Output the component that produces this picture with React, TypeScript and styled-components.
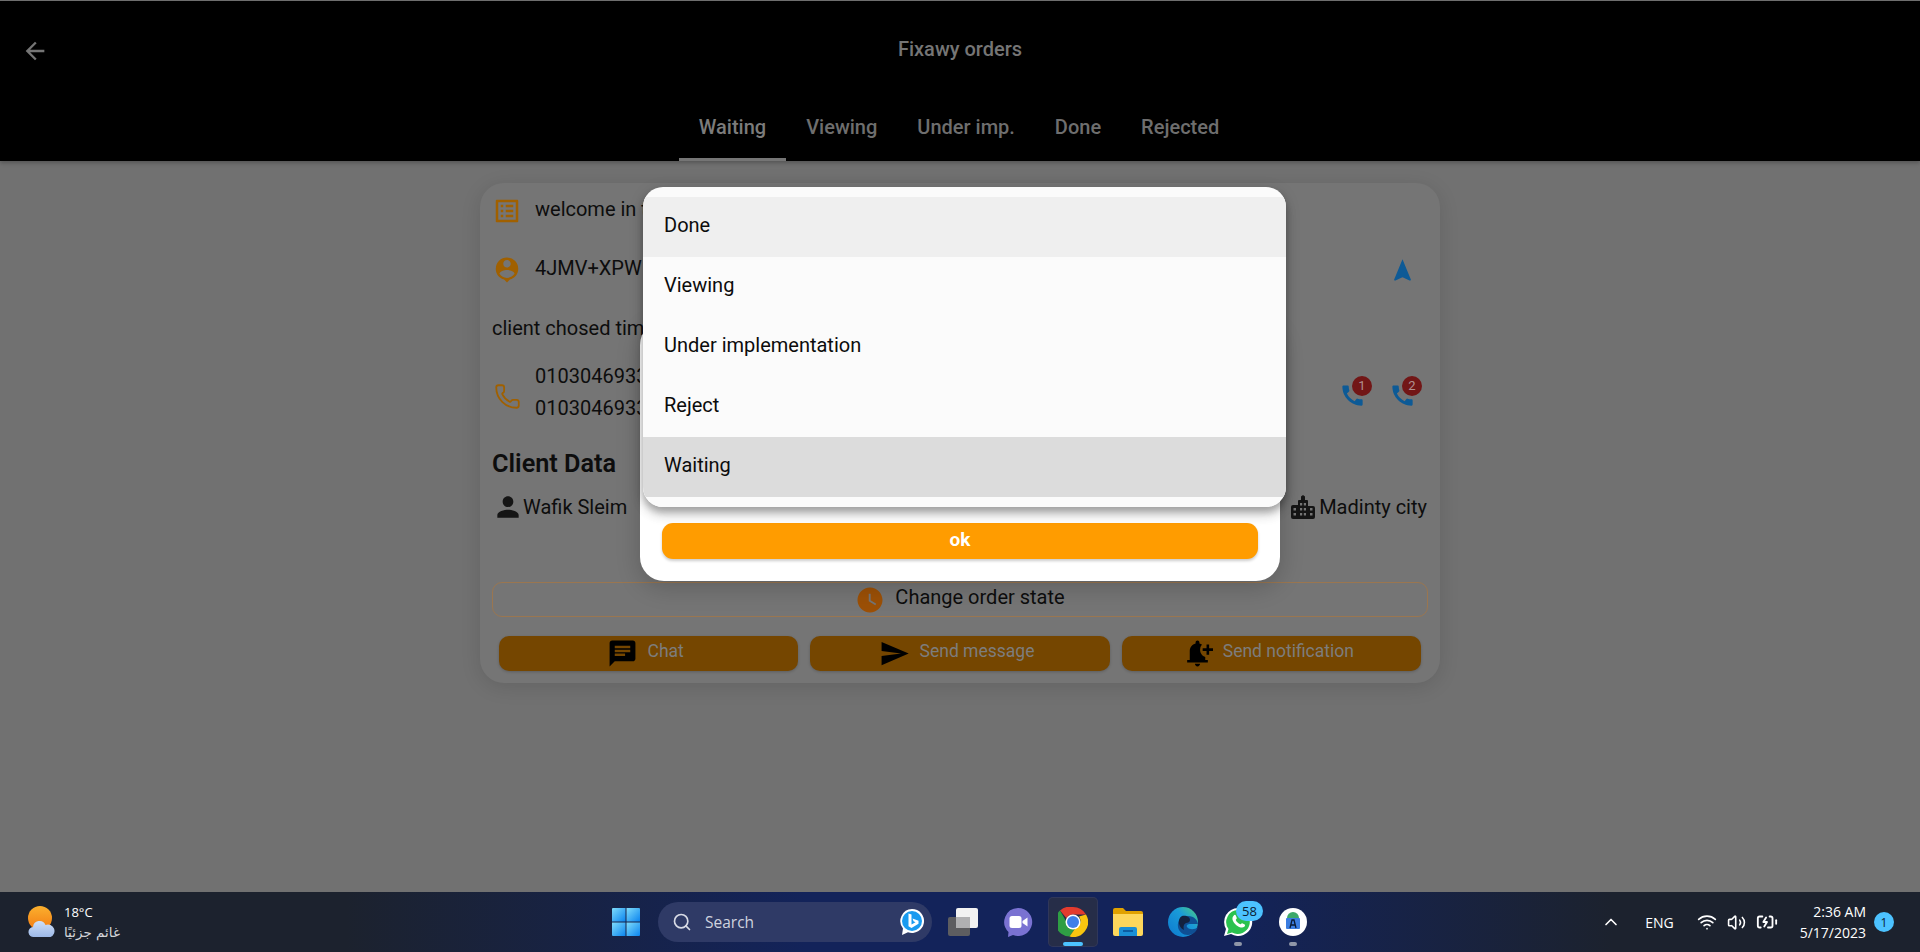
import styled, { createGlobalStyle } from 'styled-components';
import {
    MdArrowBack,
    MdOutlineListAlt,
    MdPersonPin,
    MdNavigation,
    MdCall,
    MdPerson,
    MdWatchLater,
    MdChat,
    MdSend,
    MdNotificationAdd,
} from 'react-icons/md';
import { Phone, Search, ChevronUp, Wifi, Volume2, BatteryCharging } from 'lucide-react';

const GlobalStyle = createGlobalStyle`
    html, body {
        margin: 0;
        padding: 0;
        height: 100%;
        overflow: hidden;
    }
    * {
        box-sizing: border-box;
    }
    body {
        font-family: Roboto, "Liberation Sans", sans-serif;
    }
`;

const Screen = styled.div`
    position: relative;
    display: flex;
    flex-direction: column;
    width: 1920px;
    height: 952px;
    background: #717171;
`;

const AppBar = styled.header`
    display: flex;
    flex-direction: column;
    height: 161px;
    background: #000;
    border-top: 1px solid #6e6e6e;
    box-shadow: 0 2px 4px rgba(0, 0, 0, 0.25);
`;

const Toolbar = styled.div`
    position: relative;
    display: flex;
    align-items: center;
    justify-content: center;
    height: 96px;
    color: #757575;
    font-size: 20px;
    font-weight: 500;
`;

const BackButton = styled.span`
    position: absolute;
    left: 21px;
    top: 36px;
    display: flex;
    font-size: 28px;
`;

const Tabs = styled.nav`
    display: flex;
    justify-content: center;
    height: 64px;
    padding-right: 2px;
`;

const Tab = styled.div<{ $active?: boolean }>`
    display: flex;
    align-items: center;
    height: 64px;
    padding: 0 20px 2px;
    color: ${({ $active }) => ($active ? '#7b7b7b' : '#6e6e6e')};
    font-size: 20px;
    font-weight: 500;
    border-bottom: 3px solid ${({ $active }) => ($active ? '#757575' : 'transparent')};
`;

const Body = styled.main`
    flex: 1;
    display: flex;
    justify-content: center;
    align-items: flex-start;
    padding-top: 22px;
`;

const Card = styled.section`
    display: flex;
    flex-direction: column;
    width: 960px;
    height: 500px;
    padding: 0 12px;
    background: #757575;
    border-radius: 24px;
    box-shadow: 0 4px 20px rgba(0, 0, 0, 0.12);
`;

const Row = styled.div<{ $height: number }>`
    display: flex;
    align-items: center;
    height: ${({ $height }) => $height}px;
    color: #0d0d0d;
    font-size: 20px;
`;

const LeadIcon = styled.span<{ $drop?: number }>`
    display: flex;
    justify-content: center;
    width: 30px;
    margin: ${({ $drop }) => $drop ?? 0}px 13px 0 0;
    color: #a06000;
    font-size: 30px;
`;

const RowText = styled.div<{ $lift?: number }>`
    flex: 1;
    margin-bottom: ${({ $lift }) => $lift ?? 0}px;
    line-height: 32px;
    white-space: nowrap;
`;

const CallButton = styled.span`
    position: relative;
    display: flex;
    width: 27px;
    margin-left: 23px;
    color: #0d5a96;
    font-size: 27px;
`;

const CallBadge = styled.span`
    position: absolute;
    top: -6px;
    right: -6px;
    display: flex;
    align-items: center;
    justify-content: center;
    width: 20px;
    height: 20px;
    border-radius: 50%;
    background: #721616;
    color: #b09090;
    font-size: 13px;
`;

const CallGroup = styled.div<{ $drop?: number }>`
    display: flex;
    padding: ${({ $drop }) => $drop ?? 0}px 12px 0 0;
`;

const Heading = styled.h2`
    display: flex;
    align-items: center;
    height: 56px;
    margin: 6px 0 0;
    color: #0d0d0d;
    font-size: 25.250px;
    font-weight: 600;
`;

const ClientRow = styled.div`
    display: flex;
    justify-content: space-between;
    align-items: center;
    height: 32px;
    padding-right: 1px;
    color: #0d0d0d;
    font-size: 20px;
`;

const ClientField = styled.span`
    display: flex;
    align-items: center;
`;

const ClientLabel = styled.span`
    margin-bottom: 1px;
`;

const PersonGlyph = styled(MdPerson)`
    margin-right: -1px;
    color: #151515;
    font-size: 32px;
`;

const CityGlyph = styled.svg`
    margin-right: 4px;
    color: #151515;
`;

const StateButton = styled.div`
    display: flex;
    align-items: center;
    justify-content: center;
    gap: 10px;
    height: 35px;
    margin-top: 59px;
    border: 1px solid #9a7650;
    border-radius: 10px;
    color: #0d0d0d;
    font-size: 20px;
    svg {
        font-size: 30px;
        color: #9c5006;
    }
`;

const ButtonLabel = styled.span`
    margin-bottom: 5px;
`;

const ActionRow = styled.div`
    display: grid;
    grid-template-columns: repeat(3, 1fr);
    gap: 12px;
    margin-top: 19px;
    padding: 0 7px;
`;

const ActionButton = styled.div`
    display: flex;
    align-items: center;
    justify-content: center;
    gap: 10px;
    height: 35px;
    padding-right: 7px;
    background: #754600;
    border-radius: 10px;
    color: #7d7d7d;
    font-size: 17.500px;
    box-shadow: 0 1px 3px rgba(0, 0, 0, 0.2);
    svg {
        color: #000;
        font-size: 31px;
    }
`;

const Dialog = styled.div`
    position: absolute;
    left: 640px;
    top: 321px;
    display: flex;
    align-items: flex-end;
    width: 640px;
    height: 260px;
    padding: 0 22px 22px;
    background: #fff;
    border-radius: 24px;
    box-shadow: 0 6px 24px rgba(0, 0, 0, 0.2);
`;

const OkButton = styled.div`
    display: flex;
    align-items: center;
    justify-content: center;
    width: 100%;
    height: 36px;
    padding-bottom: 4px;
    background: #ff9c00;
    border-radius: 11px;
    color: #fff;
    font-size: 19px;
    font-weight: 700;
    box-shadow: 0 2px 3px rgba(0, 0, 0, 0.2);
`;

const Menu = styled.ul`
    position: absolute;
    left: 643px;
    top: 187px;
    width: 643px;
    height: 320px;
    margin: 0;
    padding: 10px 0;
    list-style: none;
    background: #fbfbfb;
    border-radius: 20px;
    overflow: hidden;
`;

const MenuShadow = styled.div`
    position: absolute;
    left: 643px;
    top: 187px;
    width: 643px;
    height: 320px;
    border-radius: 20px;
    box-shadow:
        0 5px 6px rgba(0, 0, 0, 0.2),
        0 8px 12px rgba(0, 0, 0, 0.14),
        0 3px 16px rgba(0, 0, 0, 0.12);
`;

const MenuItem = styled.li<{ $bg?: string }>`
    display: flex;
    align-items: center;
    height: 60px;
    padding: 0 0 5px 21px;
    background: ${({ $bg }) => $bg ?? 'transparent'};
    color: #0c0c0c;
    font-size: 20px;
`;

const Taskbar = styled.footer`
    display: flex;
    align-items: center;
    height: 60px;
    background: linear-gradient(
        90deg,
        #1c222e 0,
        #1c222e 18%,
        #13235a 42%,
        #13235a 64%,
        #1c222e 84%,
        #1c222e 100%
    );
    font-family: "Open Sans", "Noto Sans", sans-serif;
    color: #fff;
`;

const WeatherArea = styled.div`
    display: flex;
    align-items: center;
    gap: 8px;
    width: 612px;
    padding-left: 27px;
`;

const WeatherText = styled.div`
    display: flex;
    flex-direction: column;
    font-size: 13px;
    line-height: 20px;
`;

const ArabicText = styled.span`
    direction: rtl;
    color: #d4d6da;
    font-family: "DejaVu Sans", sans-serif;
    font-size: 13.500px;
`;

const SearchPill = styled.div`
    display: flex;
    align-items: center;
    width: 274px;
    height: 40px;
    margin: 0 6px 0 18px;
    padding: 0 7px 0 14px;
    gap: 13px;
    border-radius: 20px;
    background: #2f3a66;
    color: #cfd3df;
    font-size: 15.500px;
`;

const SearchLabel = styled.span`
    flex: 1;
`;

const AppIcon = styled.div<{ $active?: boolean }>`
    position: relative;
    display: flex;
    align-items: center;
    justify-content: center;
    width: 50px;
    height: 50px;
    margin-right: 5px;
    border-radius: 5px;
    background: ${({ $active }) => ($active ? '#262d48' : 'transparent')};
    box-shadow: ${({ $active }) => ($active ? 'inset 0 0 0 1px #30375a' : 'none')};
`;

const RunningDot = styled.span<{ $active?: boolean }>`
    position: absolute;
    left: 50%;
    bottom: 1px;
    width: ${({ $active }) => ($active ? 20 : 8)}px;
    height: 4px;
    transform: translateX(-50%);
    border-radius: 2px;
    background: ${({ $active }) => ($active ? '#4cc2ff' : '#8f96a8')};
`;

const CountBadge = styled.span`
    position: absolute;
    top: 4px;
    right: 0;
    display: flex;
    align-items: center;
    justify-content: center;
    width: 27px;
    height: 20px;
    border-radius: 10px;
    background: #4cc2ff;
    color: #0b1b33;
    font-size: 13px;
`;

const Tray = styled.div`
    display: flex;
    align-items: center;
    margin-left: auto;
    padding-right: 26px;
    font-size: 14px;
`;

const Lang = styled.span`
    margin: 0 23px 0 24px;
    font-size: 14px;
`;

const TrayIcons = styled.div`
    display: flex;
    align-items: center;
    gap: 10px;
`;

const Clock = styled.div`
    display: flex;
    flex-direction: column;
    align-items: flex-end;
    margin-left: 22px;
    line-height: 21px;
`;

const NoticeBadge = styled.span`
    display: flex;
    align-items: center;
    justify-content: center;
    width: 20px;
    height: 20px;
    margin-left: 8px;
    border-radius: 50%;
    background: #4cc2ff;
    color: #0b1b33;
    font-size: 12px;
`;

const CityIcon = () => (
    <CityGlyph width="24" height="24" viewBox="0 0 24 24">
        <path
            fillRule="evenodd"
            fill="currentColor"
            d="M10 1.500L12 0l2 1.500V5h2a1 1 0 0 1 1 1v5h5a2 2 0 0 1 2 2v9a2 2 0 0 1-2 2H2a2 2 0 0 1-2-2V12a2 2 0 0 1 2-2h5V6a1 1 0 0 1 1-1h2zM2.500 13v2.500H5V13zm0 5v2.500H5V18zM9 8v2.500h2.200V8zm3.800 0v2.500H15V8zM9 13v2.500h2.200V13zm3.800 0v2.500H15V13zM9 18v2.500h2.200V18zm3.800 0v2.500H15V18zM19 13v2.500h2.500V13zm0 5v2.500h2.500V18z"
        />
    </CityGlyph>
);

const WeatherIcon = () => (
    <svg width="29" height="32" viewBox="0 0 29 32">
        <defs>
            <linearGradient id="sun" x1="0" y1="0" x2="0" y2="1">
                <stop offset="0" stopColor="#fbb02e" />
                <stop offset="1" stopColor="#f27c14" />
            </linearGradient>
            <linearGradient id="cloud" x1="0" y1="0" x2="0" y2="1">
                <stop offset="0" stopColor="#cfe0f8" />
                <stop offset="1" stopColor="#9db9e8" />
            </linearGradient>
        </defs>
        <circle cx="13" cy="12" r="12" fill="url(#sun)" />
        <path
            d="M7 31a5 5 0 0 1-1-10 6.500 6.500 0 0 1 12.500-2 5.500 5.500 0 0 1 5 12z"
            fill="url(#cloud)"
        />
    </svg>
);

const WindowsLogo = () => (
    <svg width="28" height="28" viewBox="0 0 28 28">
        <defs>
            <linearGradient id="win" x1="0" y1="0" x2="1" y2="1">
                <stop offset="0" stopColor="#7fdcfb" />
                <stop offset="1" stopColor="#0a84ef" />
            </linearGradient>
        </defs>
        <path d="M0 1a1 1 0 0 1 1-1h12.500v13.500H0z" fill="url(#win)" />
        <path d="M14.500 0H27a1 1 0 0 1 1 1v12.500H14.500z" fill="url(#win)" />
        <path d="M0 14.500h13.500V28H1a1 1 0 0 1-1-1z" fill="url(#win)" />
        <path d="M14.500 14.500H28V27a1 1 0 0 1-1 1H14.500z" fill="url(#win)" />
    </svg>
);

const BingIcon = () => (
    <svg width="26" height="28" viewBox="0 0 26 28">
        <path d="M13 1a12 12 0 1 1-4 23.300L3 27l1-6.500A12 12 0 0 1 13 1z" fill="#fff" />
        <circle cx="13" cy="13" r="10" fill="#1a9bf0" />
        <path d="M9.500 5.500l3 1v10l4-2.300-2-1-1-2.700 6 2.300v3l-7 4.200-3-1.700z" fill="#fff" />
    </svg>
);

const TaskViewIcon = () => (
    <svg width="30" height="28" viewBox="0 0 30 28">
        <rect x="0" y="9" width="22" height="19" rx="2" fill="#5d5d60" />
        <rect x="8" y="0" width="22" height="20" rx="2" fill="#f2f2f2" />
        <rect x="8" y="9" width="14" height="11" fill="#b0b0b2" />
    </svg>
);

const TeamsIcon = () => (
    <svg width="30" height="30" viewBox="0 0 30 30">
        <path d="M15 1a14 14 0 1 1-5 27l-5 2 .5-5A14 14 0 0 1 15 1z" fill="#7a72d2" />
        <rect x="6.500" y="9" width="12" height="12" rx="2.500" fill="#fff" />
        <path d="M19.500 14l5-3.500v9l-5-3.500z" fill="#fff" />
    </svg>
);

const ChromeIcon = () => (
    <svg width="30" height="30" viewBox="0 0 30 30">
        <path d="M15 0a15 15 0 0 1 13 7.500H15A7.500 7.500 0 0 0 8.500 11.200L2 3.500A15 15 0 0 1 15 0z" fill="#e33b2e" />
        <path d="M2 3.500l6.500 11.500a7.500 7.500 0 0 0 9 6L11.500 29.600A15 15 0 0 1 2 3.500z" fill="#2f9e44" />
        <path d="M28 7.500A15 15 0 0 1 11.500 29.600L17.500 21A7.500 7.500 0 0 0 21 9.500z" fill="#f9c50f" />
        <circle cx="15" cy="15" r="7.500" fill="#fff" />
        <circle cx="15" cy="15" r="6" fill="#3f7fe8" />
    </svg>
);

const FolderIcon = () => (
    <svg width="30" height="28" viewBox="0 0 30 28">
        <path d="M0 2a2 2 0 0 1 2-2h8l3 3h15a2 2 0 0 1 2 2v3H0z" fill="#e0a100" />
        <path d="M0 6h30v20a2 2 0 0 1-2 2H2a2 2 0 0 1-2-2z" fill="#fdd75c" />
        <path d="M6 28v-7a2 2 0 0 1 2-2h14a2 2 0 0 1 2 2v7z" fill="#1a8fd6" />
        <rect x="10" y="22" width="10" height="2" fill="#0b5ea3" />
    </svg>
);

const EdgeIcon = () => (
    <svg width="30" height="30" viewBox="0 0 30 30">
        <defs>
            <linearGradient id="edge" x1="0" y1="1" x2="1" y2="0">
                <stop offset="0" stopColor="#0c79cf" />
                <stop offset="0.600" stopColor="#1a9bd8" />
                <stop offset="1" stopColor="#4fd07a" />
            </linearGradient>
        </defs>
        <circle cx="15" cy="15" r="15" fill="url(#edge)" />
        <path d="M30 18c0-5-4-9-10-9-7 0-11 5-10 11 1 6 8 10 14 7 3-1 5-4 6-7-3 3-9 3-11 0-1-2 1-3 3-3h8z" fill="#0f4f94" />
        <path d="M14 9c4-1 8 1 8 4 0 2-2 3-4 3-2 1-3 3-2 7-6-3-7-11-2-14z" fill="#13223f" />
    </svg>
);

const WhatsAppIcon = () => (
    <svg width="30" height="30" viewBox="0 0 30 30">
        <path d="M15 1a14 14 0 1 1-7 26L1 29l2-7A14 14 0 0 1 15 1z" fill="#fff" />
        <path d="M15 3a12 12 0 1 1-6 22.500L4 27l1.500-5A12 12 0 0 1 15 3z" fill="#2ac24f" />
        <path
            d="M10.500 8.500c1-1 2-1 2.300 0l1 2.500c.2.600-1 1.600-1 2 .8 2 2.500 3.500 4.500 4.300.5 0 1.300-1.300 1.900-1.100l2.500 1.200c.7.500.3 1.700-.4 2.400-1.700 1.400-4.300.7-6.800-.8-3-2-5.500-5.500-5-8 .1-1 .8-2 1.500-2.500z"
            fill="#fff"
        />
    </svg>
);

const StudioIcon = () => (
    <svg width="28" height="28" viewBox="0 0 28 28">
        <circle cx="14" cy="14" r="14" fill="#fff" />
        <path d="M8 10a6 6 0 0 1 12 0z" fill="#3ca86a" />
        <rect x="7" y="10" width="14" height="11" rx="1" fill="#3b7de0" />
        <path d="M11 20l2-8h2l2 8M12 17h4" stroke="#0a1a33" strokeWidth="1.300" fill="none" />
    </svg>
);

export default function App() {
    return (
        <>
            <GlobalStyle />
            <Screen>
                <AppBar>
                    <Toolbar>
                        <BackButton>
                            <MdArrowBack />
                        </BackButton>
                        Fixawy orders
                    </Toolbar>
                    <Tabs>
                        <Tab $active>Waiting</Tab>
                        <Tab>Viewing</Tab>
                        <Tab>Under imp.</Tab>
                        <Tab>Done</Tab>
                        <Tab>Rejected</Tab>
                    </Tabs>
                </AppBar>
                <Body>
                    <Card>
                        <Row $height={56}>
                            <LeadIcon>
                                <MdOutlineListAlt />
                            </LeadIcon>
                            <RowText $lift={4}>welcome in t</RowText>
                        </Row>
                        <Row $height={62}>
                            <LeadIcon>
                                <MdPersonPin />
                            </LeadIcon>
                            <RowText $lift={4}>4JMV+XPW</RowText>
                            <CallGroup>
                                <CallButton>
                                    <MdNavigation />
                                </CallButton>
                            </CallGroup>
                        </Row>
                        <Row $height={54}>
                            <RowText>client chosed time</RowText>
                        </Row>
                        <Row $height={74}>
                            <LeadIcon $drop={8}>
                                <Phone size={27} strokeWidth={1.600} />
                            </LeadIcon>
                            <RowText>
                                01030469331
                                <br />
                                01030469332
                            </RowText>
                            <CallGroup $drop={6}>
                                <CallButton>
                                    <MdCall />
                                    <CallBadge>1</CallBadge>
                                </CallButton>
                                <CallButton>
                                    <MdCall />
                                    <CallBadge>2</CallBadge>
                                </CallButton>
                            </CallGroup>
                        </Row>
                        <Heading>Client Data</Heading>
                        <ClientRow>
                            <ClientField>
                                <PersonGlyph />
                                <ClientLabel>Wafik Sleim</ClientLabel>
                            </ClientField>
                            <ClientField>
                                <CityIcon />
                                <ClientLabel>Madinty city</ClientLabel>
                            </ClientField>
                        </ClientRow>
                        <StateButton>
                            <MdWatchLater />
                            <ButtonLabel>Change order state</ButtonLabel>
                        </StateButton>
                        <ActionRow>
                            <ActionButton>
                                <MdChat />
                                <ButtonLabel>Chat</ButtonLabel>
                            </ActionButton>
                            <ActionButton>
                                <MdSend />
                                <ButtonLabel>Send message</ButtonLabel>
                            </ActionButton>
                            <ActionButton>
                                <MdNotificationAdd />
                                <ButtonLabel>Send notification</ButtonLabel>
                            </ActionButton>
                        </ActionRow>
                    </Card>
                </Body>
                <Dialog>
                    <OkButton>ok</OkButton>
                </Dialog>
                <MenuShadow />
                <Menu>
                    <MenuItem $bg="#efefef">Done</MenuItem>
                    <MenuItem>Viewing</MenuItem>
                    <MenuItem>Under implementation</MenuItem>
                    <MenuItem>Reject</MenuItem>
                    <MenuItem $bg="#dcdcdc">Waiting</MenuItem>
                </Menu>
                <Taskbar>
                    <WeatherArea>
                        <WeatherIcon />
                        <WeatherText>
                            <span>18°C</span>
                            <ArabicText>غائم جزئيًا</ArabicText>
                        </WeatherText>
                    </WeatherArea>
                    <WindowsLogo />
                    <SearchPill>
                        <Search size={20} color="#d8dbe6" />
                        <SearchLabel>Search</SearchLabel>
                        <BingIcon />
                    </SearchPill>
                    <AppIcon>
                        <TaskViewIcon />
                    </AppIcon>
                    <AppIcon>
                        <TeamsIcon />
                    </AppIcon>
                    <AppIcon $active>
                        <ChromeIcon />
                        <RunningDot $active />
                    </AppIcon>
                    <AppIcon>
                        <FolderIcon />
                    </AppIcon>
                    <AppIcon>
                        <EdgeIcon />
                    </AppIcon>
                    <AppIcon>
                        <WhatsAppIcon />
                        <CountBadge>58</CountBadge>
                        <RunningDot />
                    </AppIcon>
                    <AppIcon>
                        <StudioIcon />
                        <RunningDot />
                    </AppIcon>
                    <Tray>
                        <ChevronUp size={20} />
                        <Lang>ENG</Lang>
                        <TrayIcons>
                            <Wifi size={20} />
                            <Volume2 size={19} />
                            <BatteryCharging size={22} />
                        </TrayIcons>
                        <Clock>
                            <span>2:36 AM</span>
                            <span>5/17/2023</span>
                        </Clock>
                        <NoticeBadge>1</NoticeBadge>
                    </Tray>
                </Taskbar>
            </Screen>
        </>
    );
}
